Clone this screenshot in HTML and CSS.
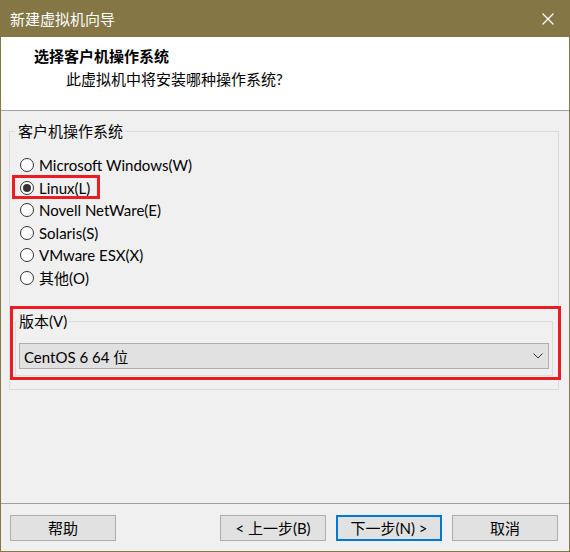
FILE: index.html
```html
<!DOCTYPE html>
<html lang="zh-CN">
<head>
    <meta charset="UTF-8">
    <title>新建虚拟机向导</title>
    <link rel="stylesheet" href="styles.css">
</head>
<body>
    <div class="window">
        <div class="titlebar">
            <span class="title">新建虚拟机向导</span>
            <svg class="close" width="12" height="12" viewBox="0 0 12 12">
                <path d="M0.5 0.5 L11.5 11.5 M11.5 0.5 L0.5 11.5" stroke="#fff" stroke-width="1.2" fill="none"/>
            </svg>
        </div>

        <div class="frame">
            <div class="header">
                <div class="heading">选择客户机操作系统</div>
                <div class="subheading">此虚拟机中将安装哪种操作系统?</div>
            </div>

            <div class="content">
                <fieldset class="group">
                    <legend>客户机操作系统</legend>
                    <div class="options">
                        <label class="radio"><span class="dot"></span>Microsoft Windows(W)</label>
                        <label class="radio checked marked"><span class="dot"></span>Linux(L)</label>
                        <label class="radio"><span class="dot"></span>Novell NetWare(E)</label>
                        <label class="radio"><span class="dot"></span>Solaris(S)</label>
                        <label class="radio"><span class="dot"></span>VMware ESX(X)</label>
                        <label class="radio"><span class="dot"></span>其他(O)</label>
                    </div>

                    <div class="version">
                        <fieldset class="group inner">
                            <legend>版本(V)</legend>
                            <div class="combo">
                                <span>CentOS 6 64 位</span>
                                <svg width="10" height="6" viewBox="0 0 10 6">
                                    <path d="M0.5 0.5 L5 5 L9.5 0.5" stroke="#333" stroke-width="1" fill="none"/>
                                </svg>
                            </div>
                        </fieldset>
                    </div>
                </fieldset>
            </div>

            <div class="footer">
                <button>帮助</button>
                <div class="spacer"></div>
                <button>&lt; 上一步(B)</button>
                <button class="default">下一步(N) &gt;</button>
                <button>取消</button>
            </div>
        </div>
    </div>
</body>
</html>
```

FILE: styles.css
```css
body {
    margin: 0;
    background-color: #f0f0f0;
    font-family: "Lato", "Noto Sans CJK SC", sans-serif;
    font-size: 15px;
    color: #000;
}

.window {
    width: 570px;
    height: 552px;
    display: flex;
    flex-direction: column;
}

.titlebar {
    height: 37px;
    background-color: #857646;
    color: #fff;
    display: flex;
    align-items: center;
    padding: 0 16px 0 10px;
    justify-content: space-between;
    flex-shrink: 0;
}

.title {
    line-height: 20px;
}

.frame {
    flex: 1;
    display: flex;
    flex-direction: column;
    border: 1px solid #857646;
    border-top: none;
    background-color: #f0f0f0;
}

.header {
    background-color: #fff;
    border-bottom: 1px solid #a0a0a0;
    padding: 9px 0 0 33px;
    height: 64px;
}

.heading {
    font-weight: bold;
    line-height: 20px;
}

.subheading {
    line-height: 20px;
    margin-top: 3px;
    padding-left: 32px;
}

.content {
    flex: 1;
    padding: 11px 10px 0 8px;
}

.group {
    margin: 0;
    padding: 0 5px 13px 5px;
    border: 1px solid #dcdcdc;
}

.group legend {
    padding: 0 2px 0 3px;
    line-height: 18px;
}

.options {
    padding-top: 14px;
}

.radio {
    display: flex;
    align-items: center;
    width: fit-content;
    height: 22.5px;
    padding-left: 5px;
    position: relative;
}

.dot {
    flex-shrink: 0;
    box-sizing: border-box;
    width: 14px;
    height: 14px;
    border: 1px solid #333;
    border-radius: 50%;
    background-color: #fff;
    margin-right: 5px;
    display: flex;
    align-items: center;
    justify-content: center;
}

.checked .dot::before {
    content: "";
    width: 8px;
    height: 8px;
    border-radius: 50%;
    background-color: #333;
}

.marked::after {
    content: "";
    position: absolute;
    top: -2px;
    bottom: 0;
    left: -3px;
    right: -10px;
    border: 3px solid #ed1c24;
}

.version {
    position: relative;
    margin-top: 23px;
}

.version::after {
    content: "";
    position: absolute;
    top: -6px;
    bottom: -4px;
    left: -5px;
    right: -8px;
    border: 3px solid #ed1c24;
}

.group.inner {
    padding: 0 3px 6px 3px;
}

.group.inner legend {
    padding: 0 2px 0 0;
}

.combo {
    margin-top: 13px;
    height: 26px;
    box-sizing: border-box;
    background-color: #e1e1e1;
    border: 1px solid #adadad;
    display: flex;
    align-items: center;
    justify-content: space-between;
    padding: 0 5px 0 4px;
}

.footer {
    border-top: 1px solid #a0a0a0;
    padding: 11px 11px 10px 9px;
    display: flex;
    gap: 10px;
}

.spacer {
    flex: 1;
}

button {
    width: 106px;
    height: 26px;
    font-family: inherit;
    font-size: 15px;
    background-color: #e1e1e1;
    border: 1px solid #adadad;
    color: #000;
    padding: 0;
    line-height: 20px;
}

button.default {
    border: 2px solid #0078d7;
}
```
